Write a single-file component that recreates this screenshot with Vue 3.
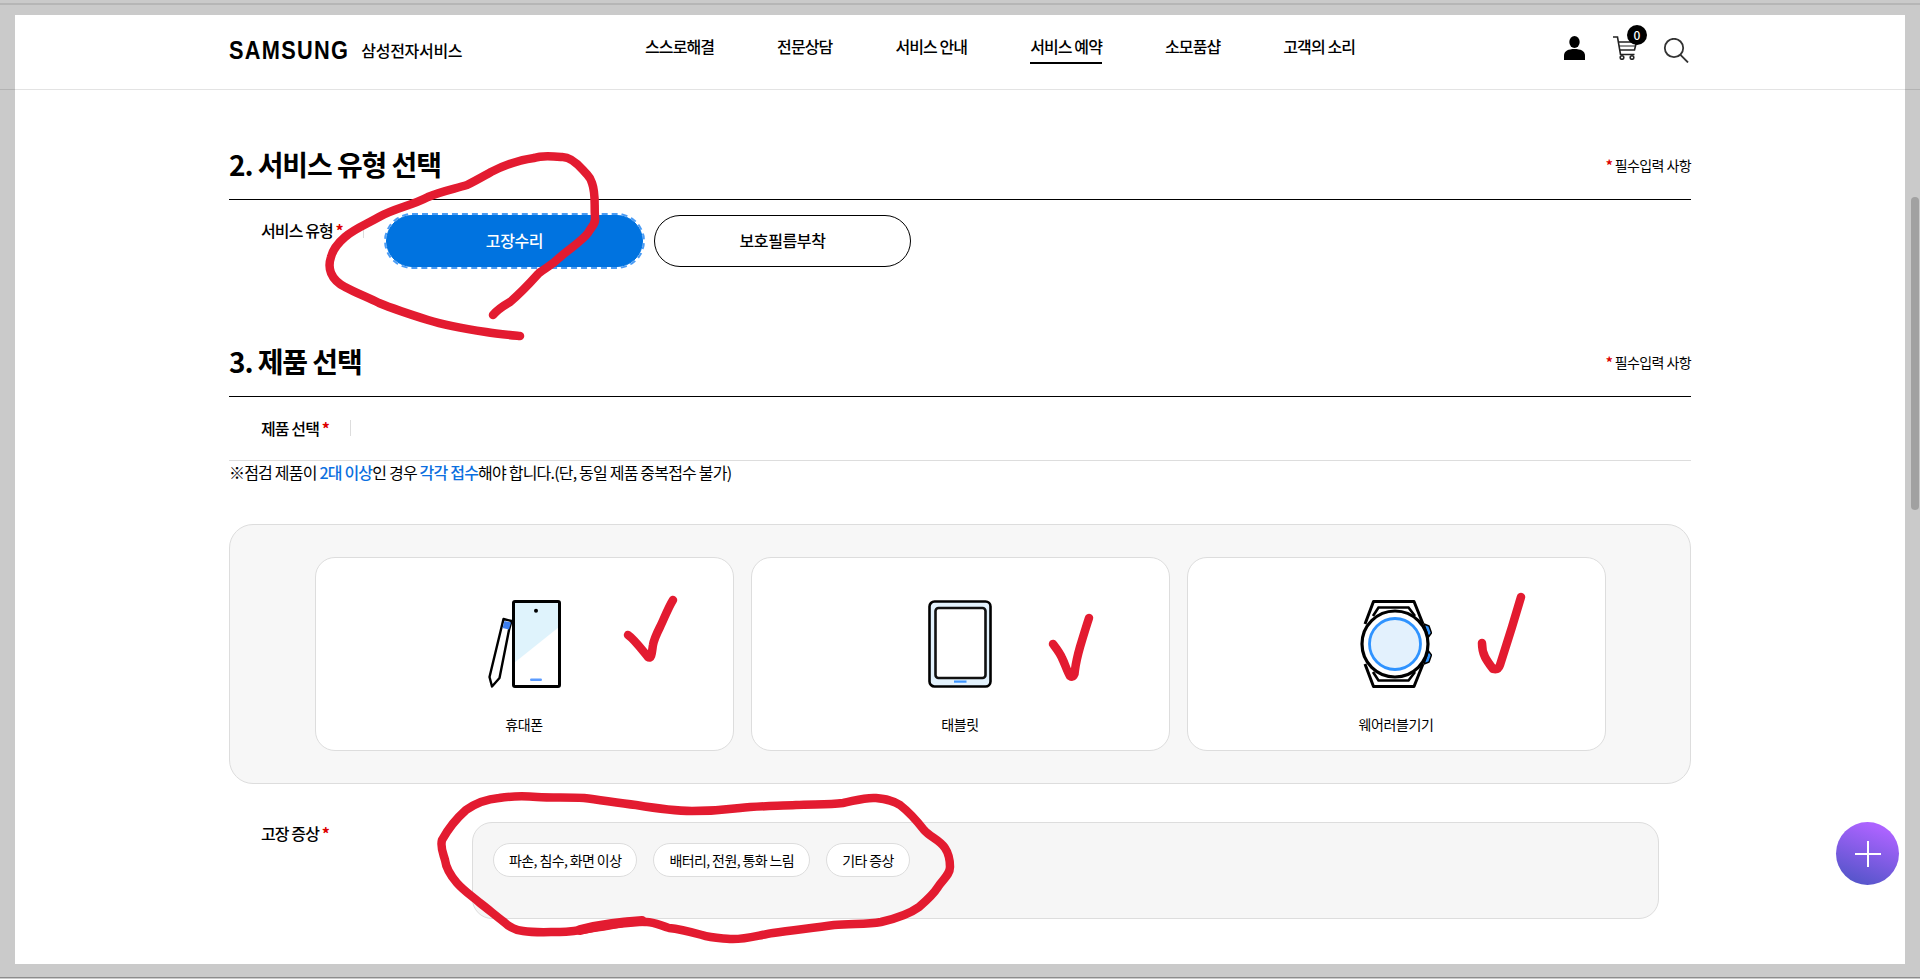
<template>
  <div class="frame">
    <div class="page">
      <header class="top">
        <div class="logo">
          <span class="logo-word">SAMSUNG</span>
          <span class="logo-sub">삼성전자서비스</span>
        </div>
        <nav class="nav">
          <a v-for="item in navItems" :key="item" :class="['nav-item', item === '서비스 예약' ? 'active' : '']">{{ item }}</a>
        </nav>
        <div class="tools">
          <svg class="tool-person" width="21" height="24" viewBox="0 0 21 24">
            <ellipse cx="10.5" cy="6" rx="5.2" ry="6" fill="#000" />
            <path d="M0 24V19.5C0 15 4.5 13 10.5 13S21 15 21 19.5V24Z" fill="#000" />
          </svg>
          <div class="tool-cart">
            <svg width="24" height="24" viewBox="0 0 24 24" fill="none" stroke="#222" stroke-width="1.6">
              <path d="M0 1H4.5L7.5 18.5H21.5" />
              <path d="M5 6H23.5L21.5 14H6.5" />
              <path d="M6 10H22.5" stroke-width="1" />
              <circle cx="9" cy="21.5" r="1.8" />
              <circle cx="19" cy="21.5" r="1.8" />
            </svg>
            <span class="badge">0</span>
          </div>
          <svg class="tool-search" width="26" height="25" viewBox="0 0 26 25" fill="none" stroke="#333" stroke-width="1.8">
            <circle cx="11" cy="10" r="9.2" />
            <path d="M17.5 16.8L25 24.5" />
          </svg>
        </div>
      </header>

      <main class="content">
        <section class="sec-service">
          <div class="sec-head">
            <h2>2. 서비스 유형 선택</h2>
            <span class="req-note"><i>*</i> 필수입력 사항</span>
          </div>
          <div class="service-row">
            <div class="field-label service-label">서비스 유형 <i>*</i></div>
            <button class="pill selected">고장수리</button>
            <button class="pill">보호필름부착</button>
          </div>
        </section>

        <section class="sec-product">
          <div class="sec-head">
            <h2>3. 제품 선택</h2>
            <span class="req-note"><i>*</i> 필수입력 사항</span>
          </div>
          <div class="product-row">
            <div class="field-label product-label">제품 선택 <i>*</i></div>
          </div>
          <p class="note">※점검 제품이 <b>2대 이상</b>인 경우 <b>각각 접수</b>해야 합니다.(단, 동일 제품 중복접수 불가)</p>

          <div class="device-panel">
            <div v-for="device in devices" :key="device.name" class="device-card">
              <svg v-if="device.icon === 'phone'" width="73" height="88" viewBox="0 0 73 88">
                <rect x="25.5" y="1.5" width="46" height="85" rx="1.5" fill="#fff" />
                <path d="M26 2H71V27L26 63Z" fill="#dff3fc" />
                <rect x="25.5" y="1.5" width="46" height="85" rx="1.5" fill="none" stroke="#000" stroke-width="3" />
                <circle cx="48" cy="10.7" r="2" fill="#000" />
                <rect x="42" y="78.5" width="12" height="2.4" rx="1.2" fill="#5b9bff" />
                <path d="M15.5 19L23.5 21L21 30L11.5 78L4 86.5L1.5 77Z" fill="#fff" stroke="#000" stroke-width="2.4" stroke-linejoin="round" />
                <path d="M16.5 21L23 22.5L21 29.5L14.5 28Z" fill="#3d7ff0" />
              </svg>
              <svg v-else-if="device.icon === 'tablet'" width="64" height="88" viewBox="0 0 64 88">
                <rect x="1.5" y="1.5" width="61" height="85" rx="5" fill="#e3f2fd" stroke="#000" stroke-width="2.6" />
                <rect x="7.5" y="8" width="50" height="70" rx="3" fill="#fff" stroke="#111" stroke-width="2.6" />
                <rect x="26" y="80.5" width="12.5" height="2.2" fill="#3d95ff" />
              </svg>
              <svg v-else width="72" height="88" viewBox="0 0 72 88" fill="none">
                <path d="M5 24L13.5 1.5H54L63 24" stroke="#000" stroke-width="3" stroke-linejoin="round" />
                <path d="M13 16L18.5 7.5H48.5L55 16" stroke="#000" stroke-width="2.6" />
                <path d="M5 64L13.5 86.5H54L63 64" stroke="#000" stroke-width="3" stroke-linejoin="round" />
                <path d="M13 72L18.5 80.5H48.5L55 72" stroke="#000" stroke-width="2.6" />
                <path d="M64 24L69 26L71.5 33L68.5 37Z" fill="#2f93ff" stroke="#000" stroke-width="1.5" stroke-linejoin="round" />
                <path d="M64 64L69 62L71.5 55L68.5 51Z" fill="#2f93ff" stroke="#000" stroke-width="1.5" stroke-linejoin="round" />
                <circle cx="35" cy="44" r="33" fill="#fff" stroke="#000" stroke-width="3.2" />
                <circle cx="35" cy="44" r="25.5" fill="#e3f1fd" stroke="#2f93ff" stroke-width="2.8" />
              </svg>
              <div class="device-name">{{ device.name }}</div>
            </div>
          </div>

          <div class="symptom-row">
            <div class="field-label symptom-label">고장 증상 <i>*</i></div>
            <div class="symptom-panel">
              <span v-for="chip in chips" :key="chip" class="chip">{{ chip }}</span>
            </div>
          </div>
        </section>
      </main>

      <div class="fab">
        <svg width="26" height="26" viewBox="0 0 26 26" stroke="#fff" stroke-width="2">
          <path d="M13 0V26M0 13H26" />
        </svg>
      </div>
    </div>

    <div class="header-line"></div>
    <div class="top-stripe"></div>
    <div class="bottom-stripe"></div>
    <div class="scroll-thumb"></div>

    <!-- red pen marks drawn over the capture -->
    <svg class="marks" width="1920" height="979" viewBox="0 0 1920 979" fill="none" stroke="#e31b30" stroke-width="8.5" stroke-linecap="round" stroke-linejoin="round">
      <path d="M493 315C498 309 503 306 510 302C522 292 530 283 539 273C547 267 552 265 559 258C570 248 581 242 588 233C592 226 596 224 595 217C594 204 596 194 592 183C590 176 589 177 583 170C576 162 569 156 561 157C552 156 542 155 534 158C518 160 505 165 491 172C482 177 477 180 467 185C454 189 442 191 428 197C411 206 395 208 379 217C367 224 354 229 345 237C338 243 333 249 331 257C329 263 329 268 331 273C334 280 339 284 345 287C356 293 367 297 379 303C396 310 412 315 428 320C447 326 466 329 486 332C497 334 509 335 520 336" />
      <path d="M628 635C634 639 643 651 648 657C652 660 652 650 653 645C654 639 657 633 660 627C664 619 668 608 673 600" />
      <path d="M1053 644C1056 648 1060 653 1062 658C1065 664 1067 671 1070 676C1073 678 1075 675 1075 670C1076 662 1078 654 1080 647C1083 637 1086 627 1089 618" />
      <path d="M1482 643C1482 648 1483 653 1485 657C1487 661 1490 665 1493 669C1497 670 1499 668 1500 665C1504 652 1508 640 1512 627C1515 617 1518 607 1521 597" />
      <path d="M442 840C448 829 457 818 466 810C476 803 487 799 499 798C512 796 525 796 537 797C553 798 568 797 584 798C601 800 618 803 636 805C654 808 673 811 692 811C708 811 724 810 740 808C758 806 777 806 796 805C812 804 828 805 843 803C854 801 865 797 876 798C885 799 893 800 900 805C909 812 917 821 924 830C930 837 940 840 945 848C949 854 950 860 950 867C950 875 942 880 938 887C933 895 926 901 919 907C908 915 894 919 881 922C866 925 850 923 834 925C814 928 793 930 773 933C759 935 744 940 730 939C720 938 711 938 702 935C691 932 680 929 669 928C661 926 653 921 645 922C637 922 630 921 622 923C612 925 603 927 593 928C582 930 571 932 560 932C548 932 535 933 523 931C516 930 509 927 504 922C496 916 488 909 480 903C472 896 464 891 457 883C451 876 446 868 445 860C443 853 440 847 442 840" />
      <path d="M580 930C595 926 610 923 642 921" stroke-width="10" />
    </svg>
  </div>
</template>

<script setup>
const navItems = ['스스로해결', '전문상담', '서비스 안내', '서비스 예약', '소모품샵', '고객의 소리'];

const devices = [
  { name: '휴대폰', icon: 'phone' },
  { name: '태블릿', icon: 'tablet' },
  { name: '웨어러블기기', icon: 'watch' }
];

const chips = ['파손, 침수, 화면 이상', '배터리, 전원, 통화 느림', '기타 증상'];
</script>

<style>
html, body {
  margin: 0;
  overflow: hidden;
}
</style>

<style scoped>
.frame {
  position: relative;
  box-sizing: border-box;
  height: 100vh;
  padding: 15px;
  background: #cacaca;
  overflow: hidden;
  font-family: "Noto Sans CJK KR", "Noto Sans", sans-serif;
  color: #000;
}
.page {
  position: relative;
  height: 100%;
  background: #fff;
  overflow: hidden;
}
.top {
  display: flex;
  align-items: flex-start;
  box-sizing: border-box;
  height: 75px;
  padding: 0 214px;
}
.logo {
  display: flex;
  align-items: center;
  flex: 0 0 416px;
  padding-top: 24px;
}
.logo-word {
  font-family: "Liberation Sans", sans-serif;
  font-size: 25px;
  font-weight: 700;
  line-height: 22px;
  letter-spacing: 1.5px;
  margin-right: -6px;
  transform: scaleX(0.87);
  transform-origin: left center;
}
.logo-sub {
  font-size: 16px;
  font-weight: 500;
  line-height: 22px;
  letter-spacing: -0.3px;
}
.nav {
  display: flex;
  gap: 63px;
  padding-top: 20px;
}
.nav-item {
  box-sizing: border-box;
  height: 29px;
  font-size: 16px;
  font-weight: 500;
  line-height: 22px;
  letter-spacing: -0.9px;
}
.nav-item.active {
  border-bottom: 2px solid #000;
}
.tools {
  display: flex;
  align-items: flex-start;
  margin-left: auto;
  margin-right: 2px;
  padding-top: 21px;
}
.tool-person {
  margin-right: 28px;
}
.tool-cart {
  position: relative;
  width: 24px;
  height: 24px;
  margin-right: 26px;
}
.tool-cart svg {
  display: block;
}
.badge {
  position: absolute;
  left: 14px;
  top: -11px;
  width: 20px;
  height: 20px;
  border-radius: 50%;
  background: #000;
  color: #fff;
  font-size: 12px;
  font-weight: 500;
  line-height: 20px;
  text-align: center;
}
.tool-search {
  margin-top: 2px;
}
.content {
  padding: 0 214px;
}
.sec-head {
  display: flex;
  align-items: center;
  justify-content: space-between;
  box-sizing: border-box;
  height: 59px;
  padding-bottom: 12px;
  border-bottom: 1px solid #000;
}
.sec-service {
  padding-top: 51px;
}
.sec-head h2 {
  margin: 0;
  font-size: 28px;
  font-weight: 700;
  line-height: 40px;
  letter-spacing: -1.1px;
}
.req-note {
  padding-top: 2px;
  font-size: 14px;
  line-height: 20px;
  letter-spacing: -0.6px;
}
.req-note i,
.field-label i {
  color: #d00;
  font-style: normal;
  font-weight: 700;
}
.field-label {
  box-sizing: border-box;
  height: 16px;
  margin-left: 32px;
  border-right: 1px solid #ddd;
  font-size: 16px;
  font-weight: 500;
  line-height: 16px;
  letter-spacing: -0.9px;
  white-space: nowrap;
}
.service-row {
  display: flex;
  align-items: flex-start;
  height: 91px;
  padding-top: 15px;
  box-sizing: border-box;
}
.service-label {
  width: 103px;
  margin-top: 7px;
  margin-right: 22px;
}
.pill {
  box-sizing: border-box;
  width: 257px;
  height: 52px;
  margin-right: 11px;
  padding: 0 0 2px;
  border: 1px solid #000;
  border-radius: 26px;
  background: #fff;
  color: #000;
  font-family: inherit;
  font-size: 16px;
  font-weight: 500;
  letter-spacing: -0.4px;
}
.pill.selected {
  border-color: #0073e0;
  background: #0073e0;
  color: #fff;
  outline: 2px dashed #4a9cf5;
}
.sec-product {
  padding-top: 47px;
}
.product-row {
  box-sizing: border-box;
  height: 64px;
  padding-top: 23px;
  border-bottom: 1px solid #ddd;
}
.product-label {
  width: 90px;
}
.note {
  margin: 0;
  font-size: 16px;
  line-height: 22px;
  letter-spacing: -0.8px;
}
.note b {
  color: #0b6fe0;
  font-weight: 500;
}
.device-panel {
  display: flex;
  justify-content: center;
  gap: 17px;
  box-sizing: border-box;
  height: 260px;
  margin-top: 41px;
  padding-top: 32px;
  border: 1px solid #ddd;
  border-radius: 24px;
  background: #f7f7f7;
}
.device-card {
  display: flex;
  flex-direction: column;
  align-items: center;
  box-sizing: border-box;
  width: 419px;
  height: 194px;
  padding-top: 42px;
  border: 1px solid #ddd;
  border-radius: 20px;
  background: #fff;
}
.device-name {
  margin-top: 25px;
  font-size: 14px;
  line-height: 22px;
  letter-spacing: -0.4px;
}
.symptom-row {
  display: flex;
  align-items: flex-start;
  margin-top: 38px;
}
.symptom-label {
  width: 211px;
  margin-top: 3px;
  border-right: 0;
}
.symptom-panel {
  display: flex;
  align-items: flex-start;
  gap: 16px;
  box-sizing: border-box;
  flex: 1;
  height: 97px;
  margin-right: 32px;
  padding: 20px 20px 0;
  border: 1px solid #ddd;
  border-radius: 20px;
  background: #f6f6f6;
}
.chip {
  box-sizing: border-box;
  height: 34px;
  padding: 0 15px;
  border: 1px solid #ddd;
  border-radius: 17px;
  background: #fff;
  font-size: 14px;
  line-height: 32px;
  letter-spacing: -0.6px;
  white-space: nowrap;
}
.fab {
  position: absolute;
  left: 1821px;
  top: 807px;
  display: flex;
  align-items: center;
  justify-content: center;
  width: 63px;
  height: 63px;
  border-radius: 50%;
  background: linear-gradient(200deg, #ac63ff 15%, #4f54c6 95%);
}
.header-line {
  position: absolute;
  left: 0;
  right: 0;
  top: 89px;
  height: 1px;
  background: rgba(0, 0, 0, 0.11);
}
.top-stripe {
  position: absolute;
  left: 0;
  right: 0;
  top: 3px;
  height: 2px;
  background: #b6b6b6;
}
.bottom-stripe {
  position: absolute;
  left: 0;
  right: 0;
  bottom: 1px;
  height: 1px;
  background: #8c8c8c;
}
.scroll-thumb {
  position: absolute;
  right: 1px;
  top: 197px;
  width: 8px;
  height: 313px;
  border-radius: 4px;
  background: #a1a1a1;
}
.marks {
  position: absolute;
  left: 0;
  top: 0;
  pointer-events: none;
}
</style>
